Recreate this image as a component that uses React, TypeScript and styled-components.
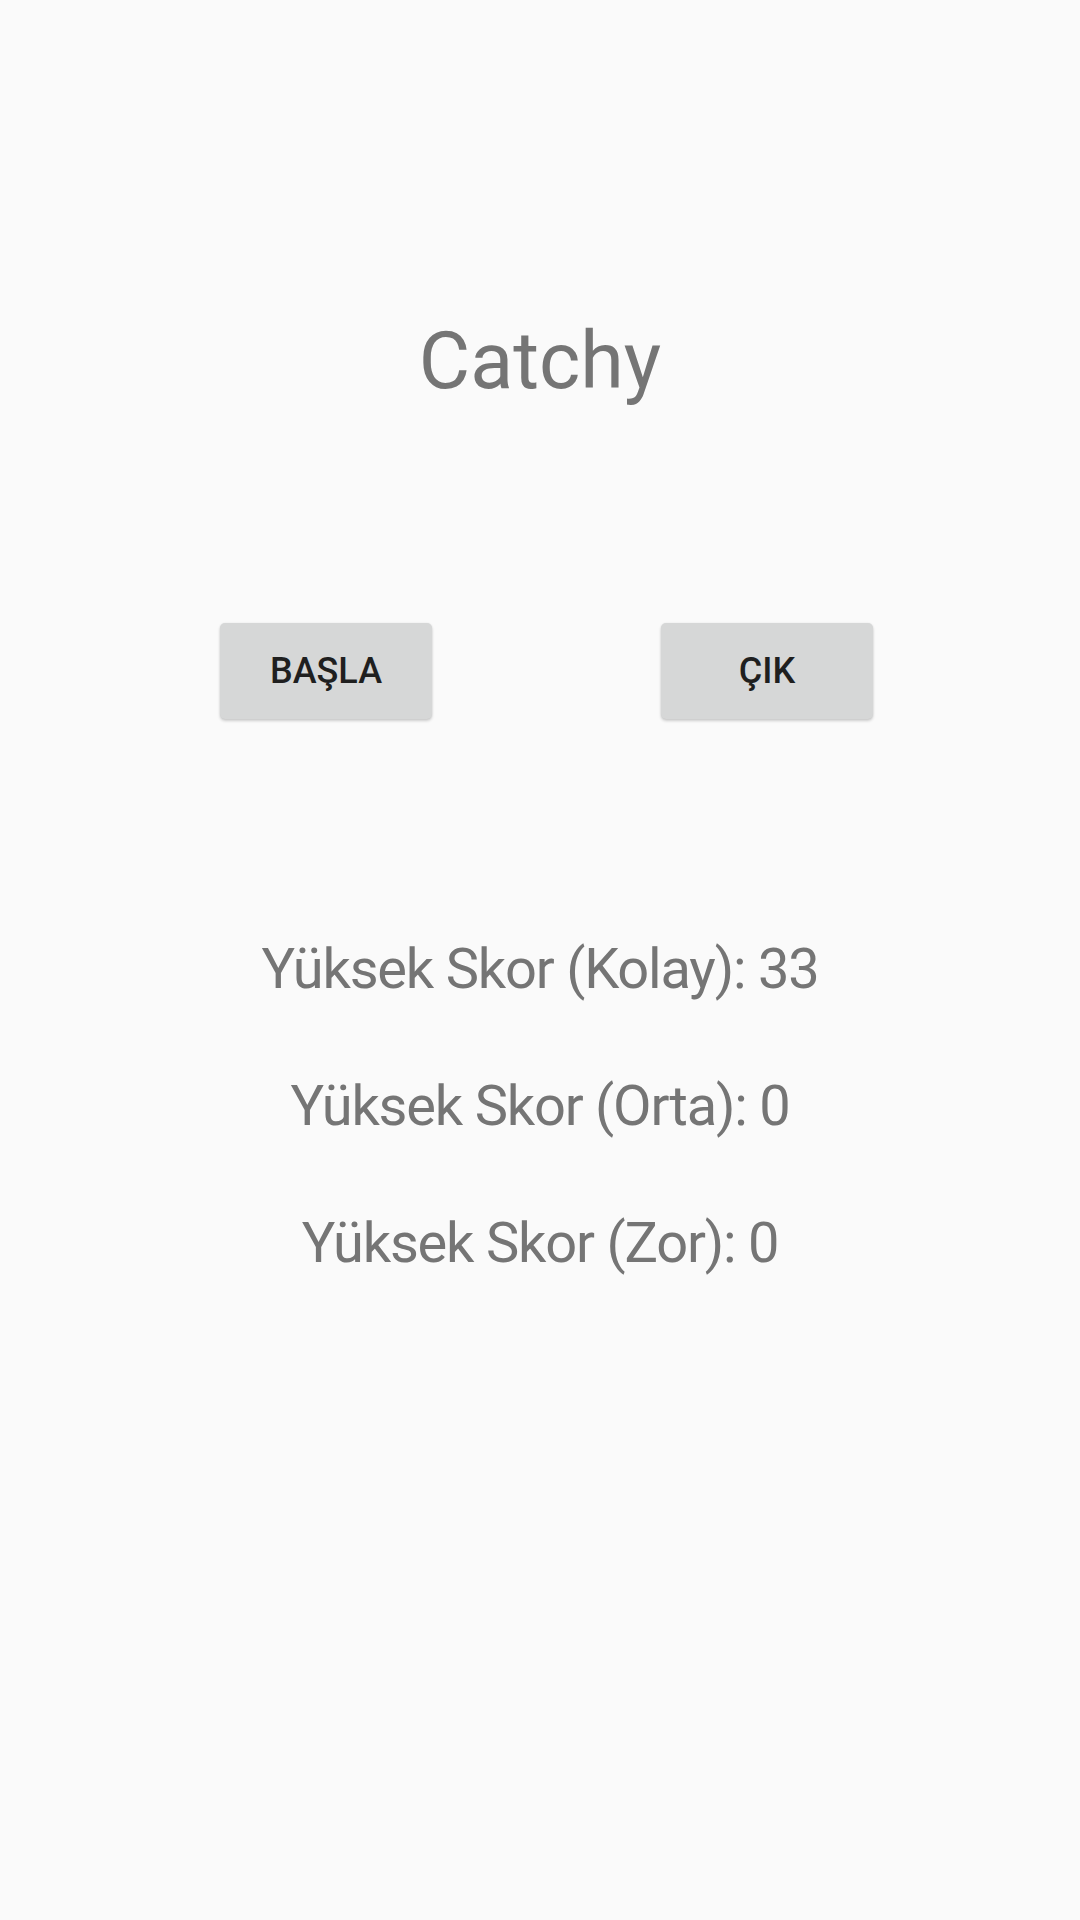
import React from "react";
import styled, { createGlobalStyle } from "styled-components";

const Global = createGlobalStyle`
  html, body { margin: 0; padding: 0; background: #fafafa; }
  body { font-family: Roboto, "Noto Sans", sans-serif; }
`;

const Page = styled.div`
  width: 1080px;
  height: 1920px;
  background: #fafafa;
  display: flex;
  flex-direction: column;
  align-items: center;
  box-sizing: border-box;
  padding-top: 315px;
`;

const Title = styled.h1`
  margin: 0;
  font-family: Roboto, sans-serif;
  font-weight: 400;
  font-size: 79px;
  line-height: 92px;
  color: #757575;
`;

const ButtonRow = styled.div`
  margin-top: 216px;
  display: flex;
  justify-content: center;
  gap: 229px;
  padding-left: 13px;
`;

const Button = styled.button`
  width: 212px;
  height: 96px;
  border: none;
  border-radius: 5px;
  background: #d6d7d7;
  box-shadow: 0 2px 3px rgba(0, 0, 0, 0.18), 0 0 2px rgba(0, 0, 0, 0.08);
  font-family: Roboto, sans-serif;
  font-weight: 500;
  font-size: 36px;
  color: #1f1f1f;
  letter-spacing: 0;
  text-transform: uppercase;
  padding: 0;
  display: flex;
  align-items: center;
  justify-content: center;
`;

const Scores = styled.div`
  margin-top: 217px;
  display: flex;
  flex-direction: column;
  align-items: center;
  gap: 71px;
`;

const Score = styled.div`
  font-family: Roboto, sans-serif;
  font-size: 56px;
  line-height: 66px;
  letter-spacing: -1.2px;
  color: #757575;
`;

export default function App() {
  const scores = [
    { label: "Kolay", value: 33 },
    { label: "Orta", value: 0 },
    { label: "Zor", value: 0 },
  ];
  return (
    <>
      <Global />
      <Page>
        <Title>Catchy</Title>
        <ButtonRow>
          <Button>BAŞLA</Button>
          <Button>ÇIK</Button>
        </ButtonRow>
        <Scores>
          {scores.map((s) => (
            <Score key={s.label}>
              Yüksek Skor ({s.label}): {s.value}
            </Score>
          ))}
        </Scores>
      </Page>
    </>
  );
}
